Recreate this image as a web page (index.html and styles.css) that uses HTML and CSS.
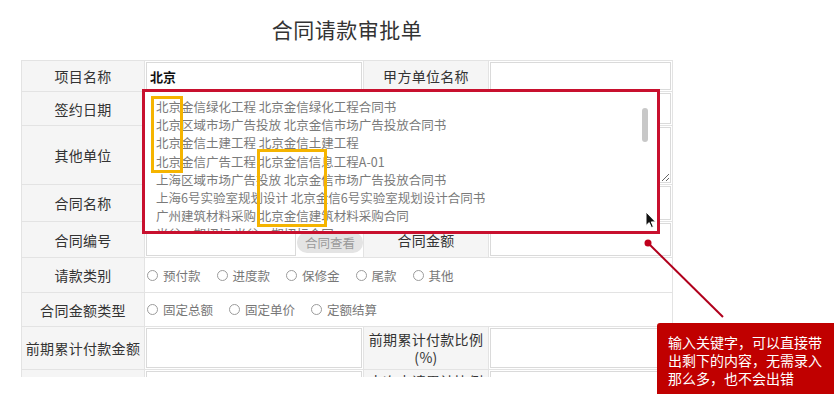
FILE: index.html
```html
<!DOCTYPE html>
<html lang="zh-CN">
<head>
  <meta charset="UTF-8" />
  <title>合同请款审批单</title>
  <link rel="stylesheet" href="styles.css">
</head>
<body>
  <div class="page">
    <h1 class="title">合同请款审批单</h1>

    <!-- form sheet, cut at the bottom like the screenshot -->
    <div class="sheet">
      <div class="form">
        <div class="label">项目名称</div>
        <div class="field"><input type="text" class="key" value="北京"></div>
        <div class="label">甲方单位名称</div>
        <div class="field"><input type="text"></div>

        <div class="label">签约日期</div>
        <div class="field"><input type="text"></div>
        <div class="label">乙方单位名称</div>
        <div class="field"><input type="text"></div>

        <div class="label">其他单位</div>
        <div class="field wide"><textarea></textarea></div>

        <div class="label">合同名称</div>
        <div class="field wide"><input type="text"></div>

        <div class="label">合同编号</div>
        <div class="field split">
          <input type="text">
          <button class="pill">合同查看</button>
        </div>
        <div class="label">合同金额</div>
        <div class="field"><input type="text"></div>

        <div class="label">请款类别</div>
        <div class="field wide radios">
          <label><input type="radio" name="kind">预付款</label>
          <label><input type="radio" name="kind">进度款</label>
          <label><input type="radio" name="kind">保修金</label>
          <label><input type="radio" name="kind">尾款</label>
          <label><input type="radio" name="kind">其他</label>
        </div>

        <div class="label">合同金额类型</div>
        <div class="field wide radios">
          <label><input type="radio" name="amount">固定总额</label>
          <label><input type="radio" name="amount">固定单价</label>
          <label><input type="radio" name="amount">定额结算</label>
        </div>

        <div class="label">前期累计付款金额</div>
        <div class="field"><input type="text"></div>
        <div class="label">前期累计付款比例<br>(%)</div>
        <div class="field"><input type="text"></div>

        <div class="label">本期请款金额</div>
        <div class="field"><input type="text"></div>
        <div class="label">本次申请累计比例<br>(%)</div>
        <div class="field"><input type="text"></div>
      </div>
    </div>

    <!-- autocomplete list for 项目名称 -->
    <div class="suggest">
      <div class="item">北京金信绿化工程 北京金信绿化工程合同书</div>
      <div class="item">北京区域市场广告投放 北京金信市场广告投放合同书</div>
      <div class="item">北京金信土建工程 北京金信土建工程</div>
      <div class="item">北京金信广告工程 北京金信信息工程A-01</div>
      <div class="item">上海区域市场广告投放 北京金信市场广告投放合同书</div>
      <div class="item">上海6号实验室规划设计 北京金信6号实验室规划设计合同书</div>
      <div class="item">广州建筑材料采购 北京金信建筑材料采购合同</div>
      <div class="item">光谷一期招标 光谷一期招标合同</div>
      <div class="bar"></div>
    </div>

    <div class="mark m1"></div>
    <div class="mark m2"></div>

    <svg class="cursor" width="12" height="18" viewBox="0 0 12 18">
      <path d="M1 1 L1 14.5 L4.2 11.6 L6.4 16.6 L8.4 15.7 L6.3 10.9 L10.6 10.9 Z" fill="#111" stroke="#fff" stroke-width="1"/>
    </svg>

    <svg class="leader" width="834" height="394">
      <line x1="648" y1="243" x2="723" y2="317" stroke="#b0001c" stroke-width="2"/>
      <circle cx="648" cy="243" r="3.5" fill="#c0001c"/>
    </svg>

    <div class="note">输入关键字，可以直接带<br>出剩下的内容，无需录入<br>那么多，也不会出错</div>
  </div>
</body>
</html>
```

FILE: styles.css
```css
body {
  margin: 0;
  background: #fff;
  color: #333;
  font-family: "Noto Sans CJK SC", "Noto Sans", sans-serif;
}
.page {
  position: relative;
  width: 834px;
  height: 394px;
  overflow: hidden;
}
.title {
  margin: 0 0 0 21px;
  width: 652px;
  height: 60px;
  line-height: 58px;
  text-align: center;
  font-size: 21px;
  font-weight: normal;
  letter-spacing: 0.5px;
  color: #333;
}
.sheet {
  margin-left: 21px;
  width: 652px;
  height: 317px;
  overflow: hidden;
}
.form {
  display: grid;
  grid-template-columns: 122px 218px 124px 183px;
  grid-template-rows: 30px 33px 58px 36px 35px 34px 33px 42px 40px;
  gap: 1px;
  padding: 1px;
  background: #e3e3e3;
}
.label {
  display: flex;
  align-items: center;
  justify-content: center;
  text-align: center;
  background: #f5f5f5;
  font-size: 14px;
  line-height: 18px;
  letter-spacing: 0.3px;
  color: #333;
}
.field {
  display: flex;
  align-items: stretch;
  background: #fff;
  padding: 1px;
}
.wide {
  grid-column: span 3;
}
.field input[type="text"],
.field textarea {
  flex: 1;
  min-width: 0;
  margin: 0;
  padding: 0 3px;
  border: 1px solid #dadada;
  background: #fff;
  font-family: inherit;
  font-size: 13px;
  color: #111;
}
.field .key {
  font-weight: bold;
  border-color: #d3e0ea;
}
.split input[type="text"] {
  flex: 0 0 142px;
}
.pill {
  flex: 0 0 auto;
  align-self: center;
  height: 21px;
  margin: 6px 0 0 1px;
  padding: 0 8px;
  border: none;
  border-radius: 10px;
  background: #e4e4e4;
  color: #9a9a9a;
  font-family: inherit;
  font-size: 12.5px;
  line-height: 21px;
  white-space: nowrap;
}
.radios {
  align-items: center;
  padding-left: 2px;
}
.radios label {
  display: flex;
  align-items: center;
  margin-right: 16px;
  font-size: 12.5px;
  color: #777;
}
.radios input[type="radio"] {
  appearance: none;
  width: 11px;
  height: 11px;
  margin: 0 5px 0 0;
  border: 1px solid #9c9c9c;
  border-radius: 50%;
  background: #fff;
}

/* overlays */
.suggest {
  position: absolute;
  left: 142px;
  top: 89px;
  width: 518px;
  height: 145px;
  box-sizing: border-box;
  padding: 6px 0 0 11px;
  border: 3px solid #c8102e;
  background: #fff;
  overflow: hidden;
  font-size: 12.5px;
  line-height: 18.2px;
  color: #7a7a7a;
  white-space: nowrap;
}
.suggest .bar {
  position: absolute;
  left: 497px;
  top: 16px;
  width: 6px;
  height: 34px;
  border-radius: 3px;
  background: #c8c8c8;
}
.mark {
  position: absolute;
  box-sizing: border-box;
  border: 3px solid #f5b400;
}
.m1 {
  left: 151px;
  top: 96px;
  width: 32px;
  height: 77px;
}
.m2 {
  left: 257px;
  top: 149px;
  width: 70px;
  height: 78px;
}
.cursor {
  position: absolute;
  left: 645px;
  top: 211px;
}
.leader {
  position: absolute;
  left: 0;
  top: 0;
  pointer-events: none;
}
.note {
  position: absolute;
  left: 657px;
  top: 323px;
  width: 177px;
  height: 72px;
  box-sizing: border-box;
  padding: 10px 0 0 11px;
  border-radius: 3px 0 0 0;
  background: #c00000;
  color: #fff;
  font-size: 14px;
  line-height: 18px;
  white-space: nowrap;
}
```
